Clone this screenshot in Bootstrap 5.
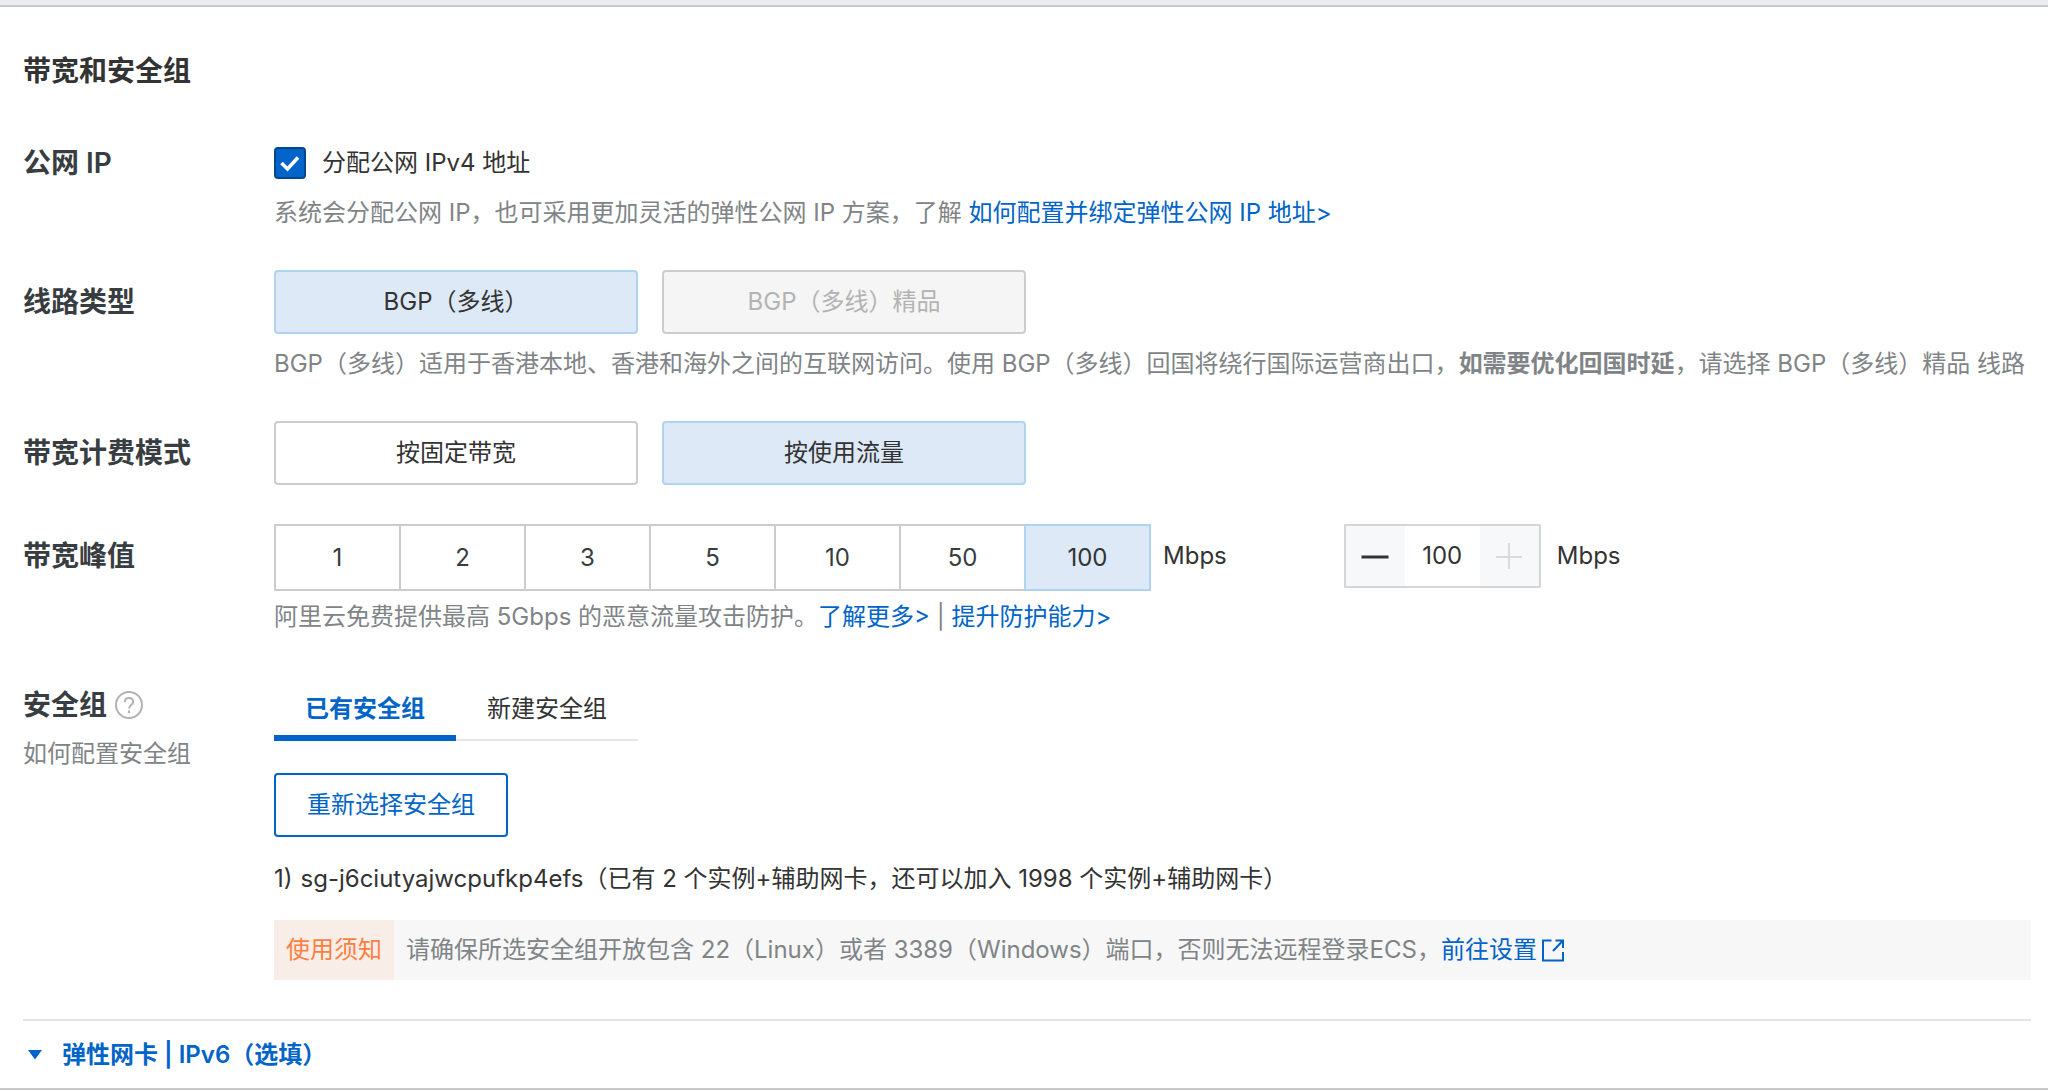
<!DOCTYPE html>
<html lang="zh-CN">
<head>
<meta charset="utf-8">
<meta name="viewport" content="width=device-width, initial-scale=1">
<title>带宽和安全组</title>
<link href="https://cdn.jsdelivr.net/npm/bootstrap@5.3.0/dist/css/bootstrap.min.css" rel="stylesheet">
<style>
  :root { --brand: #0064c8; --ink: #333; --soft: #808487; --edge: #ccc; }
  body { font-family: Inter, "Noto Sans CJK SC", sans-serif; font-size: 24px; line-height: 36px; color: var(--ink); background: #fff; }
  a { color: var(--brand); text-decoration: none; }
  .top-strip { height: 7px; background: #ebecf0; border-bottom: 2px solid #c8c9cc; }
  .config { padding: 44px 17px 0 23px; border-bottom: 2px solid #c8c9cc; }
  .config-title { font-size: 28px; line-height: 40px; font-weight: 600; margin-bottom: 56px; }
  .config-row { margin-bottom: 39px; }
  .config-label { flex: 0 0 251px; font-size: 28px; line-height: 64px; font-weight: 600; color: #373d41; }
  .label-check { line-height: 32px; }
  .label-tabs { line-height: 62px; }
  .sub-link { display: block; font-size: 24px; line-height: 36px; font-weight: 400; color: var(--soft); }
  .hint { color: var(--soft); margin: 12px 0 0; }
  .agree { min-height: 32px; line-height: 32px; padding: 0; gap: 16px; }
  .agree .form-check-input { width: 32px; height: 32px; margin: 0; float: none; border: 2px solid #00478f; border-radius: 4px; }
  .agree .form-check-input:checked { background-color: var(--brand); background-size: 28px 28px; background-image: url("data:image/svg+xml,%3Csvg xmlns='http://www.w3.org/2000/svg' viewBox='0 0 28 28'%3E%3Cpath d='M5.5 14l6 6L22 8.5' fill='none' stroke='%23fff' stroke-width='3.6'/%3E%3C/svg%3E"); }
  .choice { width: 364px; height: 64px; padding: 0; font-size: 24px; color: var(--ink); border: 2px solid var(--edge); border-radius: 4px; background: #fff; }
  .choice:disabled { color: #b3b3b3; background: #f5f5f5; border-color: var(--edge); opacity: 1; }
  .choice.active, .step.active { color: var(--ink); background: #dee9f7; border-color: #b0d3f2; }
  .step { width: 127px; height: 67px; flex: none !important; padding: 0; font-size: 24px; color: #373d41; border: 2px solid var(--edge); border-radius: 0; background: #fff; }
  .btn-group.steps > .step:not(:first-child) { margin-left: -2px; }
  .unit { line-height: 64px; }
  .stepper { width: 197px; height: 64px; margin-left: 117px; border: 2px solid #d5d6d8; }
  .stepper .btn { width: 59px; padding: 0; border: 0; border-radius: 0; background: #f7f8fa; opacity: 1; }
  .stepper .form-control { padding: 0; font-size: 24px; text-align: center; border: 0; border-radius: 0; color: var(--ink); background: #fff; }
  .sg-tabs { width: 364px; height: 67px; border-bottom: 2px solid #e5e6e8; }
  .sg-tabs .nav-link { flex: 1; height: 67px; padding: 8px 0 0; line-height: 36px; color: var(--ink); border: 0; border-bottom: 6px solid transparent; border-radius: 0; background: none; }
  .sg-tabs .nav-link.active { color: var(--brand); font-weight: 600; border-color: var(--brand); background: none; }
  .repick { height: 64px; width: 234px; padding: 0; margin-top: 32px; font-size: 24px; color: var(--brand); border: 2px solid var(--brand); border-radius: 4px; background: #fff; }
  .sg-list { margin: 24px 0 23px; }
  .notice { min-height: 59px; background: #f7f7f7; color: var(--soft); }
  .notice-tag { padding: 12px; color: #ff7f41; background: #f8ede7; }
  .more-bar { border-top: 2px solid #e3e4e6; height: 69px; }
  .more-btn { gap: 20px; padding: 0 0 0 5px; font-size: 24px; font-weight: 600; color: var(--brand); border: 0; background: none; }
</style>
<script src="https://cdn.jsdelivr.net/npm/bootstrap@5.3.0/dist/js/bootstrap.bundle.min.js"></script>
</head>
<body>
<div class="top-strip"></div>
<main class="config">
  <h1 class="config-title">带宽和安全组</h1>

  <section class="config-row d-flex">
    <div class="config-label label-check">公网 IP</div>
    <div class="flex-grow-1">
      <div class="form-check agree d-flex align-items-center m-0">
        <input class="form-check-input" type="checkbox" id="ipv4" checked>
        <label class="form-check-label" for="ipv4">分配公网 IPv4 地址</label>
      </div>
      <p class="hint mt-3">系统会分配公网 IP，也可采用更加灵活的弹性公网 IP 方案，了解 <a href="#">如何配置并绑定弹性公网 IP 地址&gt;</a></p>
    </div>
  </section>

  <section class="config-row d-flex">
    <div class="config-label">线路类型</div>
    <div class="flex-grow-1">
      <div class="d-flex gap-4">
        <button type="button" class="btn choice active" aria-pressed="true">BGP（多线）</button>
        <button type="button" class="btn choice" disabled>BGP（多线）精品</button>
      </div>
      <p class="hint">BGP（多线）适用于香港本地、香港和海外之间的互联网访问。使用 BGP（多线）回国将绕行国际运营商出口，<strong>如需要优化回国时延</strong>，请选择 BGP（多线）精品 线路</p>
    </div>
  </section>

  <section class="config-row d-flex">
    <div class="config-label">带宽计费模式</div>
    <div class="d-flex gap-4">
      <button type="button" class="btn choice">按固定带宽</button>
      <button type="button" class="btn choice active" aria-pressed="true">按使用流量</button>
    </div>
  </section>

  <section class="config-row d-flex">
    <div class="config-label">带宽峰值</div>
    <div class="flex-grow-1">
      <div class="d-flex">
        <div class="btn-group steps" role="group" aria-label="带宽峰值">
          <button type="button" class="btn step">1</button>
          <button type="button" class="btn step">2</button>
          <button type="button" class="btn step">3</button>
          <button type="button" class="btn step">5</button>
          <button type="button" class="btn step">10</button>
          <button type="button" class="btn step">50</button>
          <button type="button" class="btn step active" aria-pressed="true">100</button>
        </div>
        <span class="unit ps-2 ms-1">Mbps</span>
        <div class="input-group stepper flex-nowrap">
          <button type="button" class="btn d-flex align-items-center justify-content-center" aria-label="减少">
            <svg width="28" height="28" viewBox="0 0 28 28" fill="none" stroke="#333" stroke-width="3"><path d="M0.5 15h27"/></svg>
          </button>
          <input type="text" class="form-control" value="100" aria-label="带宽 Mbps">
          <button type="button" class="btn d-flex align-items-center justify-content-center" aria-label="增加" disabled>
            <svg width="28" height="28" viewBox="0 0 28 28" fill="none" stroke="#d9d9d9" stroke-width="2"><path d="M1 15h26M14 1v26"/></svg>
          </button>
        </div>
        <span class="unit ms-3">Mbps</span>
      </div>
      <p class="hint mt-2">阿里云免费提供最高 5Gbps 的恶意流量攻击防护。<a href="#">了解更多&gt;</a> | <a href="#">提升防护能力&gt;</a></p>
    </div>
  </section>

  <section class="config-row d-flex">
    <div class="config-label label-tabs">
      <div class="d-flex align-items-center gap-2">安全组
        <svg width="28" height="28" viewBox="0 0 28 28" fill="none" stroke="#b3b3b3" stroke-width="2" role="img" aria-label="帮助"><circle cx="14" cy="14" r="13"/><path d="M9.8 11.2c0-2.6 1.8-4.2 4.2-4.2s4.2 1.6 4.2 3.9c0 3-4.2 3.2-4.2 6.600"/><path d="M14 19.600v2.600"/></svg>
      </div>
      <a class="sub-link" href="#">如何配置安全组</a>
    </div>
    <div class="flex-grow-1">
      <div class="nav sg-tabs" role="tablist">
        <button type="button" class="nav-link active" role="tab" aria-selected="true">已有安全组</button>
        <button type="button" class="nav-link" role="tab" aria-selected="false">新建安全组</button>
      </div>
      <button type="button" class="btn repick d-block">重新选择安全组</button>
      <div class="sg-list d-flex gap-2"><span>1)</span><span>sg-j6ciutyajwcpufkp4efs（已有 2 个实例+辅助网卡，还可以加入 1998 个实例+辅助网卡）</span></div>
      <div class="notice d-flex align-items-center">
        <span class="notice-tag">使用须知</span>
        <span class="ps-2 ms-1">请确保所选安全组开放包含 22（Linux）或者 3389（Windows）端口，否则无法远程登录ECS，<a class="d-inline-flex align-items-center gap-1" href="#">前往设置 <svg width="24" height="24" viewBox="0 0 24 24" fill="none" stroke="currentColor" stroke-width="2"><path d="M10.500 2.500H2v20h20v-8.500M14.500 2.500H22V10M21.500 3L12 13"/></svg></a></span>
      </div>
    </div>
  </section>

  <div class="more-bar d-flex align-items-center">
    <button type="button" class="more-btn d-flex align-items-center" aria-expanded="false">
      <svg width="14" height="10" viewBox="0 0 14 10" fill="currentColor"><path d="M0 0h14L7 9.500z"/></svg>
      弹性网卡 | IPv6（选填）
    </button>
  </div>
</main>
</body>
</html>
